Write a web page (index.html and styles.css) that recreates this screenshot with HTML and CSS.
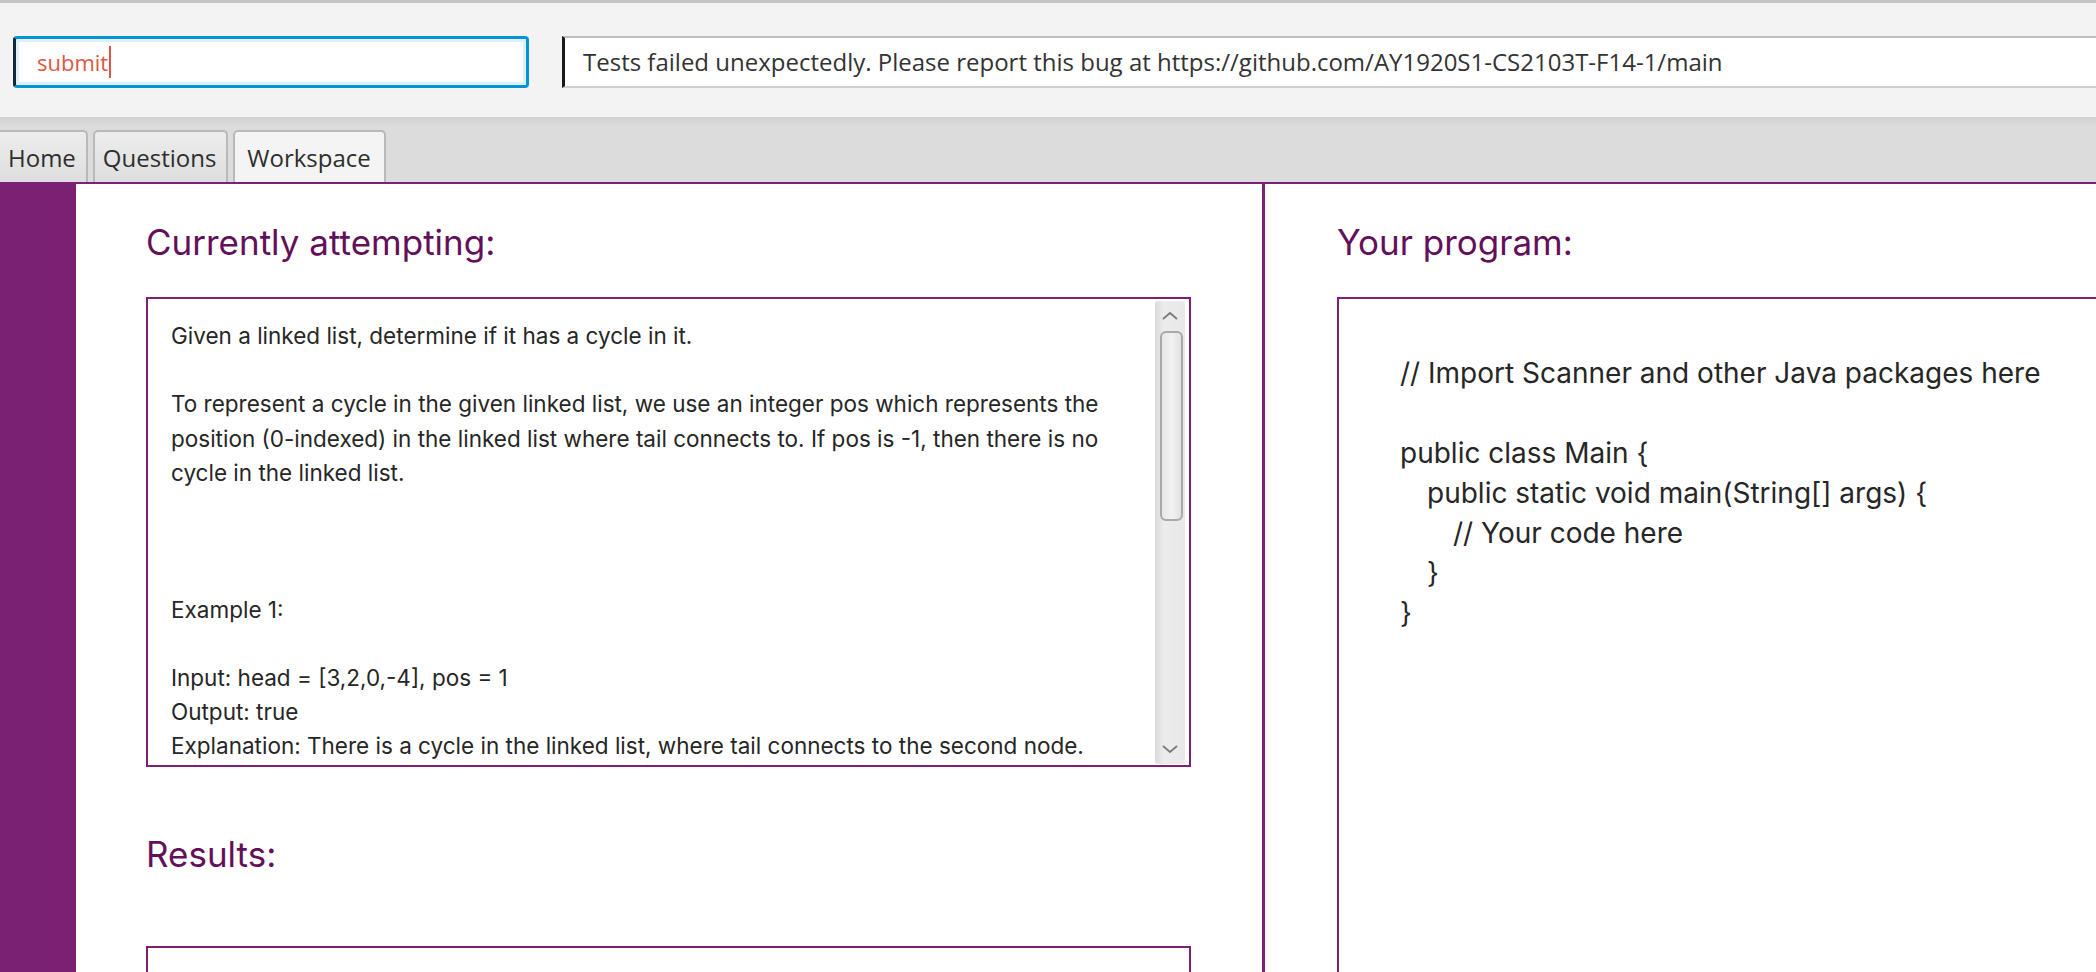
FILE: index.html
```html
<!DOCTYPE html>
<html>
<head>
<meta charset="utf-8">
<title>Workspace</title>
<link rel="stylesheet" href="styles.css">
</head>
<body>
<div class="app">
  <header class="toolbar">
    <div class="field field-command"><span class="command-text">submit</span><span class="caret"></span></div>
    <div class="field field-result"><span class="result-text">Tests failed unexpectedly. Please report this bug at https://github.com/AY1920S1-CS2103T-F14-1/main</span></div>
  </header>
  <nav class="tabbar">
    <div class="tab">Home</div>
    <div class="tab">Questions</div>
    <div class="tab tab-active">Workspace</div>
  </nav>
  <main class="content">
    <aside class="sidebar"></aside>
    <section class="panel panel-left">
      <h2 class="heading">Currently attempting:</h2>
      <div class="question-box">
        <div class="question-text">
          <p class="line">Given a linked list, determine if it has a cycle in it.</p>
          <p class="line">&nbsp;</p>
          <p class="line">To represent a cycle in the given linked list, we use an integer pos which represents the</p>
          <p class="line">position (0-indexed) in the linked list where tail connects to. If pos is -1, then there is no</p>
          <p class="line">cycle in the linked list.</p>
          <p class="line">&nbsp;</p>
          <p class="line">&nbsp;</p>
          <p class="line">&nbsp;</p>
          <p class="line">Example 1:</p>
          <p class="line">&nbsp;</p>
          <p class="line">Input: head = [3,2,0,-4], pos = 1</p>
          <p class="line">Output: true</p>
          <p class="line">Explanation: There is a cycle in the linked list, where tail connects to the second node.</p>
        </div>
        <div class="scrollbar">
          <div class="scroll-arrow">
            <svg width="18" height="10" viewBox="0 0 18 10"><path d="M2 8 L9 2 L16 8" fill="none" stroke="#7a7a7a" stroke-width="1.8"/></svg>
          </div>
          <div class="scroll-track"><div class="scroll-thumb"></div></div>
          <div class="scroll-arrow">
            <svg width="18" height="10" viewBox="0 0 18 10"><path d="M2 2 L9 8 L16 2" fill="none" stroke="#7a7a7a" stroke-width="1.8"/></svg>
          </div>
        </div>
      </div>
      <h2 class="heading heading-results">Results:</h2>
      <div class="results-box"></div>
    </section>
    <div class="divider"></div>
    <section class="panel panel-right">
      <h2 class="heading">Your program:</h2>
      <div class="code-box">
        <div class="code">
          <div class="code-line">// Import Scanner and other Java packages here</div>
          <div class="code-line">&nbsp;</div>
          <div class="code-line">public class Main {</div>
          <div class="code-line indent-1">public static void main(String[] args) {</div>
          <div class="code-line indent-2">// Your code here</div>
          <div class="code-line indent-1">}</div>
          <div class="code-line">}</div>
        </div>
      </div>
    </section>
  </main>
</div>
</body>
</html>
```

FILE: styles.css
```css
* { box-sizing: border-box; }
html, body { margin: 0; padding: 0; }
body {
  width: 2096px;
  height: 972px;
  overflow: hidden;
  background: #ffffff;
  font-family: Inter, "Liberation Sans", sans-serif;
}
.app { display: flex; flex-direction: column; height: 972px; }

.toolbar {
  height: 117px;
  flex: none;
  background: #f3f3f3;
  border-top: 3px solid #c4c4c4;
  display: flex;
  align-items: center;
  padding: 0 0 0 13px;
  gap: 33px;
}
.field {
  height: 52px;
  background: #fff;
  display: flex;
  align-items: center;
  font-family: "Open Sans", Inter, sans-serif;
  font-size: 22px;
  margin-top: 3px;
}
.field-command {
  width: 516px;
  border: 3px solid #0096d6;
  border-left: 3px solid #0b2a3a;
  border-radius: 4px;
  box-shadow: inset 0 0 0 3px #dff0f9;
  padding-left: 21px;
  color: #e0573f;
}
.caret {
  display: inline-block;
  width: 2px;
  height: 32px;
  background: #e0573f;
  margin-left: 1px;
}
.field-result {
  flex: 1;
  border-top: 2px solid #bdbdbd;
  border-bottom: 2px solid #cfcfcf;
  border-left: 3px solid #1a1a1a;
  padding-left: 18px;
  color: #333333;
  font-size: 24px;
  white-space: nowrap;
  overflow: hidden;
}

.tabbar {
  height: 67px;
  flex: none;
  background: linear-gradient(#d2d2d2, #dcdcdc 10px, #dcdcdc);
  display: flex;
  align-items: flex-end;
  gap: 5px;
  border-bottom: 2px solid #7b2173;
  padding-left: 0;
}
.tab {
  height: 52px;
  padding: 0 10px 0 8px;
  display: flex;
  align-items: center;
  font-family: "Open Sans", Inter, sans-serif;
  font-size: 24px;
  color: #2e2e2e;
  background: linear-gradient(#ededed, #dedede);
  border: 2px solid #b9b9b9;
  border-bottom: none;
  border-radius: 5px 5px 0 0;
}
.tab:first-child { border-left: none; border-radius: 0 5px 0 0; padding-left: 8px; }
.tab-active {
  background: #f4f4f4;
  padding: 0 13px 0 12px;
}

.content { flex: 1; display: flex; min-height: 0; }
.sidebar { width: 76px; flex: none; background: #7b2173; }
.panel { background: #fff; min-width: 0; overflow: hidden; }
.panel-left { width: 1186px; flex: none; padding-left: 70px; }
.divider { width: 3px; flex: none; background: #7b2173; }
.panel-right { flex: 1; padding-left: 72px; }

.heading {
  margin: 0;
  font-weight: 400;
  font-size: 35px;
  color: #640f5a;
  height: 113px;
  padding-top: 37px;
  line-height: 42px;
}
.heading-results { height: 179px; padding-top: 66px; }

.question-box {
  width: 1045px;
  height: 470px;
  border: 2px solid #7b2173;
  display: flex;
  overflow: hidden;
}
.question-text {
  flex: 1;
  padding: 20px 0 0 23px;
  font-size: 22.5px;
  line-height: 34.2px;
  color: #262626;
}
.line { margin: 0; white-space: nowrap; }

.scrollbar {
  width: 30px;
  flex: none;
  margin: 2px 4px 1px 0;
  background: linear-gradient(90deg, #dadada, #ececec 30%, #e8e8e8);
  border-radius: 3px;
  display: flex;
  flex-direction: column;
}
.scroll-arrow {
  height: 30px;
  display: flex;
  align-items: center;
  justify-content: center;
  flex: none;
}
.scroll-track { flex: 1; padding: 0 2px 0 5px; }
.scroll-thumb {
  height: 190px;
  border: 2px solid #a9a9a9;
  border-radius: 6px;
  background: linear-gradient(90deg, #e6e6e6, #f2f2f2 50%, #e2e2e2);
}

.results-box {
  width: 1045px;
  height: 60px;
  border: 2px solid #7b2173;
  border-bottom: none;
}

.code-box {
  height: 700px;
  border: 2px solid #7b2173;
  border-right: none;
  padding: 54px 0 0 61px;
}
.code {
  font-size: 28px;
  line-height: 40px;
  color: #262626;
}
.code-line { white-space: pre; }
.indent-1 { padding-left: 27px; }
.indent-2 { padding-left: 53px; }
```
